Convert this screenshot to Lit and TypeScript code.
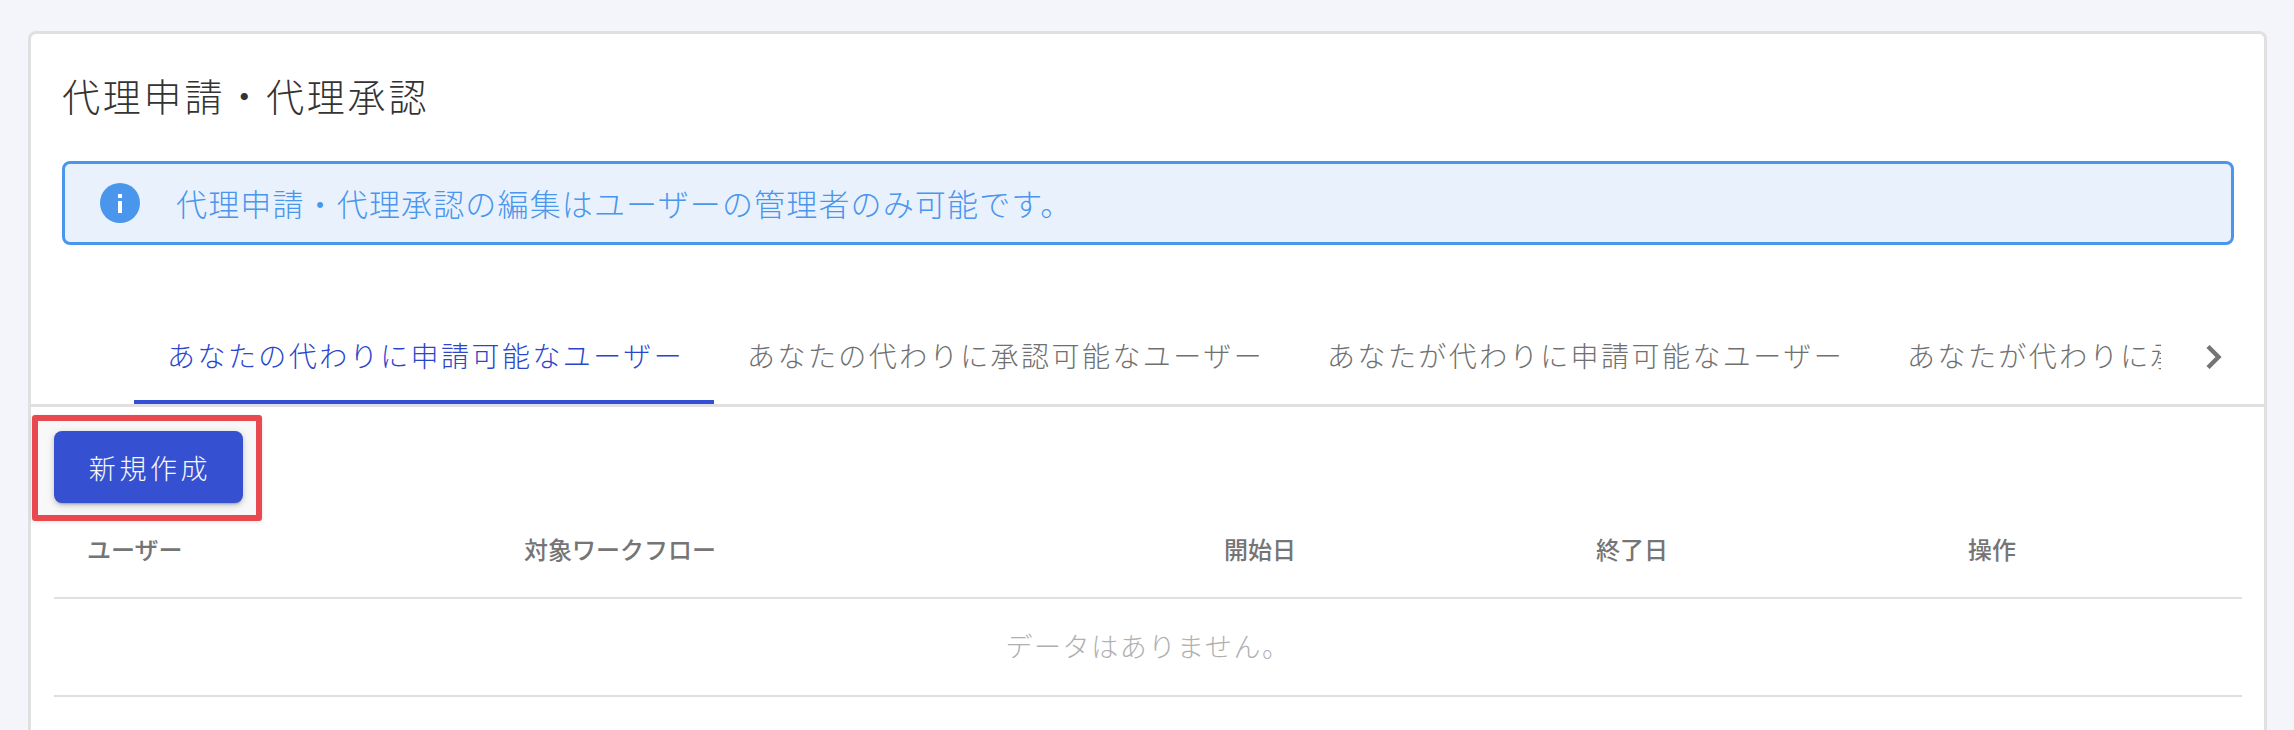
import { LitElement, html, css, svg } from "lit";
import { customElement } from "lit/decorators.js";

const TABS = [
  "あなたの代わりに申請可能なユーザー",
  "あなたの代わりに承認可能なユーザー",
  "あなたが代わりに申請可能なユーザー",
  "あなたが代わりに承認可能なユーザー",
];
const COLS = ["ユーザー", "対象ワークフロー", "開始日", "終了日", "操作"];

@customElement("app-root")
export class AppRoot extends LitElement {
  static styles = css`
    :host {
      display: block;
      height: 730px;
      overflow: hidden;
      box-sizing: border-box;
      padding: 31px 27px 0 28px;
      background: #f3f5fa;
      font-family: Roboto, "Noto Sans CJK JP", sans-serif;
      font-weight: 300;
    }
    .card {
      background: #fff;
      border: 3px solid #e0e0e0;
      border-bottom: none;
      border-radius: 8px 8px 0 0;
      height: 700px;
      box-sizing: border-box;
    }
    .title {
      margin: 0;
      padding: 39px 0 0 31px;
      height: 84px;
      box-sizing: border-box;
      font-size: 38px;
      line-height: 50px;
      letter-spacing: 2.8px;
      font-weight: 300;
      color: #333;
    }
    .alert {
      margin: 43px 30px 0 31px;
      height: 84px;
      box-sizing: border-box;
      border: 3px solid #4a96ec;
      border-radius: 8px;
      background: #e9f1fd;
      display: flex;
      align-items: center;
      padding-left: 35px;
      gap: 36px;
      color: #4a96ec;
      font-size: 31px;
      letter-spacing: 1.15px;
    }
    .alert svg { width: 40px; height: 40px; flex: none; }
    .alert span { margin-top: -2px; }
    .tabs {
      margin-top: 57px;
      height: 105px;
      box-sizing: border-box;
      border-bottom: 3px solid #e0e0e0;
      display: flex;
    }
    .side { flex: none; width: 103px; padding: 8px 0 0 2px; box-sizing: border-box; display: flex; align-items: center; justify-content: center; }
    .side svg { width: 16px; height: 24px; }
    .strip { flex: 1; min-width: 0; overflow: hidden; display: flex; }
    .tab {
      flex: none;
      width: 580px;
      box-sizing: border-box;
      height: 102px;
      padding: 8px 0 0 33px;
      display: flex;
      align-items: center;
      white-space: nowrap;
      font-size: 28px;
      letter-spacing: 2.45px;
      color: #707070;
      border-bottom: 4px solid transparent;
    }
    .tab.active { color: #2a46cc; border-bottom-color: #324fd5; }
    .body { padding: 24px 22px 0 23px; }
    .btn-wrap { position: relative; width: 189px; height: 72px; }
    .btn {
      width: 100%;
      height: 100%;
      border: none;
      border-radius: 8px;
      background: #324fd5;
      color: #fff;
      font: inherit;
      font-size: 27px;
      letter-spacing: 3.6px;
      padding: 0 0 0 3px;
      box-shadow: 0 3px 2px -2px rgba(0,0,0,.2), 0 2px 4px rgba(0,0,0,.14), 0 2px 10px rgba(0,0,0,.12);
    }
    .mark {
      position: absolute;
      left: -22px;
      top: -16px;
      width: 230px;
      height: 106px;
      box-sizing: border-box;
      border: 6px solid #e8494e;
      border-radius: 3px;
      background: rgba(120,120,120,.05);
      box-shadow: 0 1px 4px rgba(0,0,0,.12);
      pointer-events: none;
    }
    .row {
      display: grid;
      grid-template-columns: 437px 700px 372px 372px 307px;
    }
    .head {
      height: 96px;
      border-bottom: 2px solid #e0e0e0;
      align-items: center;
      box-sizing: border-box;
      padding-bottom: 4px;
      color: #757575;
      font-size: 24px;
      font-weight: 500;
    }
    .head span { padding-left: 33px; }
    .empty {
      height: 98px;
      box-sizing: border-box;
      border-bottom: 2px solid #e0e0e0;
      padding-bottom: 3px;
      display: flex;
      align-items: center;
      justify-content: center;
      color: #b0b0b0;
      font-size: 27px;
      letter-spacing: 1.6px;
    }
  `;

  render() {
    return html`
      <div class="card">
        <h1 class="title">代理申請・代理承認</h1>
        <div class="alert">
          <svg viewBox="0 0 40 40">
            <circle cx="20" cy="20" r="20" fill="#4a96ec"></circle>
            <rect x="18" y="11" width="4" height="4" fill="#fff"></rect>
            <rect x="18" y="18" width="4" height="12" fill="#fff"></rect>
          </svg>
          <span>代理申請・代理承認の編集はユーザーの管理者のみ可能です。</span>
        </div>
        <div class="tabs">
          <div class="side"></div>
          <div class="strip">
            ${TABS.map((t, i) => html`<div class="tab ${i === 0 ? "active" : ""}">${t}</div>`)}
          </div>
          <div class="side">
            <svg viewBox="0 0 16 24">
              ${svg`<path d="M2 1.5 L12.5 12 L2 22.5" fill="none" stroke="#757575" stroke-width="4.4"></path>`}
            </svg>
          </div>
        </div>
        <div class="body">
          <div class="btn-wrap">
            <button class="btn">新規作成</button>
            <div class="mark"></div>
          </div>
          <div class="row head">${COLS.map((c) => html`<span>${c}</span>`)}</div>
          <div class="empty">データはありません。</div>
        </div>
      </div>
    `;
  }
}
